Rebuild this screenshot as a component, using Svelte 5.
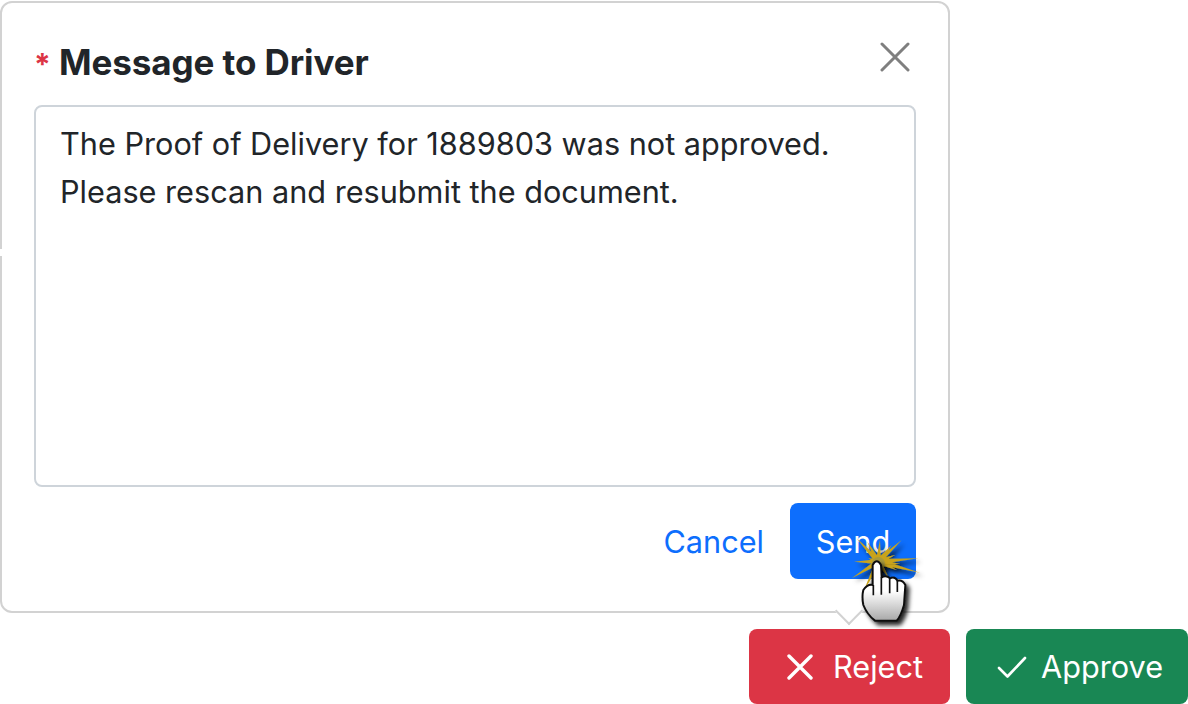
<script>
	let message = 'The Proof of Delivery for 1889803 was not approved.\nPlease rescan and resubmit the document.';
	const rays = [
		[230, 145], [262, 155], [300, 150], [335, 165], [365, 150], [345, 195], [415, 205], [360, 222],
		[420, 248], [350, 240], [325, 262], [215, 265], [250, 240], [222, 215], [265, 205], [250, 305]
	];
	const cx = 295;
	const cy = 215;

	// each ray is a thin spike, wide at the middle of the burst
	function spike([x, y]) {
		let dx = x - cx;
		let dy = y - cy;
		let len = Math.hypot(dx, dy);
		let nx = (-dy / len) * 8;
		let ny = (dx / len) * 8;
		return `M${cx + nx} ${cy + ny}L${x} ${y}L${cx - nx} ${cy - ny}Z`;
	}
	let star = rays.map(spike).join('');
</script>

<main>
	<section class="popover">
		<div class="head">
			<h2><span class="req">*</span> Message to Driver</h2>
			<button class="close" aria-label="Close">
				<svg viewBox="0 0 30 30" width="30" height="30">
					<path d="M2 2L28 28M28 2L2 28" stroke="#7f7f7f" stroke-width="3" stroke-linecap="round" fill="none" />
				</svg>
			</button>
		</div>
		<textarea value={message}></textarea>
		<div class="foot">
			<button class="link">Cancel</button>
			<button class="send">Send</button>
		</div>
		<span class="arrow"></span>
		<span class="gap"></span>
	</section>

	<div class="actions">
		<button class="act reject">
			<svg viewBox="0 0 26 26" width="26" height="26">
				<path d="M2 2L24 24M24 2L2 24" stroke="#fff" stroke-width="3.4" stroke-linecap="round" fill="none" />
			</svg>
			Reject
		</button>
		<button class="act approve">
			<svg viewBox="0 0 30 24" width="30" height="24">
				<path d="M2 13L10.500 21.500L28 3" stroke="#fff" stroke-width="2.600" stroke-linecap="round" stroke-linejoin="round" fill="none" />
			</svg>
			Approve
		</button>
	</div>

	<svg class="cursor" viewBox="0 0 540 450" width="180" height="150">
		<defs>
			<filter id="shade" x="-30%" y="-30%" width="170%" height="170%">
				<feDropShadow dx="10" dy="11" stdDeviation="6" flood-color="#000" flood-opacity="0.85" />
			</filter>
			<linearGradient id="palm" x1="0" y1="0" x2="0" y2="1">
				<stop offset="0.5" stop-color="#fff" />
				<stop offset="1" stop-color="#a8a8a8" />
			</linearGradient>
		</defs>
		<g filter="url(#shade)">
			<path d={star} fill="#c9a31a" />
			<circle cx={cx} cy={cy + 6} r="20" fill="#a89a3c" />
		</g>
		<path
			filter="url(#shade)"
			d="M278 225Q290 203 303 225L305 262Q318 254 330 265Q345 258 352 272Q368 268 376 285L372 345Q362 380 350 392L285 392Q262 375 250 345Q245 320 250 300Q262 282 278 285Z"
			fill="url(#palm)"
			stroke="#111"
			stroke-width="6"
			stroke-linejoin="round"
		/>
		<path d="M280 285V316M304 262V314M329 266V310M352 272V306" stroke="#111" stroke-width="5" fill="none" />
	</svg>
</main>

<style>
	:global(body) {
		margin: 0;
		background: #fff;
		font-family: Inter, 'Liberation Sans', sans-serif;
		color: #212529;
	}

	main {
		width: 1188px;
		height: 704px;
		overflow: hidden;
		position: relative;
		padding-top: 1px;
		box-sizing: border-box;
	}

	.popover {
		position: relative;
		box-sizing: border-box;
		width: 950px;
		height: 612px;
		border: 2px solid #d2d2d2;
		border-radius: 12px;
		padding: 24px 32px 32px;
		display: flex;
		flex-direction: column;
	}

	.head {
		display: flex;
		justify-content: space-between;
		align-items: center;
		height: 78px;
	}

	h2 {
		margin: 0 0 6px;
		font-size: 35px;
		font-weight: 700;
		letter-spacing: -0.08px;
		line-height: 48px;
		color: #212529;
	}

	.req {
		color: #dc3545;
		font-size: 30px;
	}

	.close {
		border: 0;
		background: none;
		padding: 0;
		margin: 0 6px 18px 0;
		height: 30px;
	}

	textarea {
		display: block;
		box-sizing: border-box;
		width: 882px;
		height: 382px;
		border: 2px solid #ced4da;
		border-radius: 8px;
		padding: 13px 24px 11px;
		font-family: inherit;
		font-size: 30.660px;
		line-height: 48px;
		color: #212529;
		resize: none;
		outline: none;
		overflow: hidden;
	}

	.foot {
		display: flex;
		justify-content: flex-end;
		align-items: center;
		gap: 26px;
		margin-top: 16px;
	}

	.foot button {
		font-family: inherit;
		font-size: 30.660px;
		line-height: 48px;
		border: 0;
	}

	.link {
		background: none;
		color: #0d6efd;
		padding: 2px 0 0;
	}

	.send {
		background: #0d6efd;
		color: #fff;
		width: 126px;
		height: 76px;
		border-radius: 8px;
		padding: 2px 0 0;
	}

	.arrow {
		position: absolute;
		left: 837px;
		bottom: -10px;
		width: 20px;
		height: 20px;
		box-sizing: border-box;
		background: #fff;
		border-right: 2px solid #d2d2d2;
		border-bottom: 2px solid #d2d2d2;
		transform: rotate(45deg);
	}

	.gap {
		position: absolute;
		left: -2px;
		top: 246px;
		width: 2px;
		height: 7px;
		background: #fff;
	}

	.actions {
		display: flex;
		justify-content: flex-end;
		gap: 16px;
		margin-top: 16px;
	}

	.act {
		display: flex;
		align-items: center;
		gap: 20px;
		height: 75px;
		border: 0;
		border-radius: 8px;
		color: #fff;
		font-family: inherit;
		font-size: 30.660px;
		padding: 0;
	}

	.reject {
		width: 201px;
		background: #dc3545;
		padding-left: 38px;
	}

	.approve {
		width: 222px;
		background: #198754;
		gap: 14px;
		padding-left: 31px;
	}

	.cursor {
		position: absolute;
		left: 780px;
		top: 490px;
	}
</style>
